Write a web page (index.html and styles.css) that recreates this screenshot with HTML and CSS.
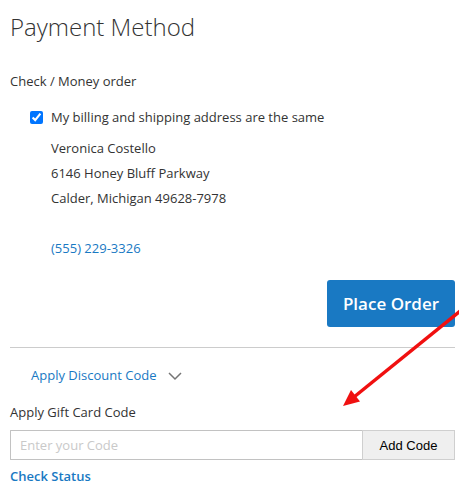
FILE: index.html
```html
<!DOCTYPE html>
<html lang="en">
<head>
  <meta charset="UTF-8">
  <title>Payment Method</title>
  <link rel="stylesheet" href="styles.css">
</head>
<body>
  <div class="checkout-payment">
    <div class="step-title">Payment Method</div>

    <div class="payment-method-title">Check / Money order</div>

    <div class="billing-same">
      <input type="checkbox" id="billing-same" checked>
      <label for="billing-same">My billing and shipping address are the same</label>
    </div>

    <div class="billing-address">
      <div>Veronica Costello</div>
      <div>6146 Honey Bluff Parkway</div>
      <div>Calder, Michigan 49628-7978</div>
      <div>&nbsp;</div>
      <a href="#" class="phone">(555) 229-3326</a>
    </div>

    <div class="actions-toolbar">
      <button class="action-primary">Place Order</button>
    </div>

    <div class="divider"></div>

    <div class="discount-toggle">
      <span>Apply Discount Code</span>
      <svg class="chevron" width="14" height="9" viewBox="0 0 14 9">
        <polyline points="1,1 7,7 13,1" fill="none" stroke="#757575" stroke-width="1.5"/>
      </svg>
    </div>

    <div class="giftcard-title">Apply Gift Card Code</div>
    <div class="giftcard-form">
      <input type="text" class="giftcard-input" placeholder="Enter your Code">
      <button class="giftcard-add">Add Code</button>
    </div>
    <a href="#" class="check-status">Check Status</a>
  </div>

  <!-- annotation arrow drawn over the page -->
  <svg class="annotation" width="459" height="501" viewBox="0 0 459 501">
    <line x1="464" y1="308" x2="354" y2="397" stroke="#f01010" stroke-width="3.5"/>
    <polygon points="343,406 351,390 360,401.5" fill="#f01010"/>
  </svg>
</body>
</html>
```

FILE: styles.css
```css
body {
  margin: 0;
  background: #fff;
  color: #333;
  font-family: "Open Sans", "Liberation Sans", sans-serif;
  font-size: 13px;
  overflow: hidden;
}

.checkout-payment {
  width: 445px;
  padding: 11px 0 0 10px;
}

.step-title {
  font-size: 24px;
  font-weight: 300;
  line-height: 32px;
}

.payment-method-title {
  margin-top: 26px;
  line-height: 25px;
}

.billing-same {
  margin-top: 11px;
  padding-left: 20px;
  display: flex;
  align-items: center;
  line-height: 25px;
}

.billing-same input {
  width: 13px;
  height: 13px;
  margin: 0 8px 0 0;
}

.billing-address {
  margin-top: 6px;
  padding-left: 41px;
  line-height: 25px;
}

.phone {
  color: #1979c3;
  text-decoration: none;
}

.actions-toolbar {
  margin-top: 19px;
  display: flex;
  justify-content: flex-end;
}

.action-primary {
  width: 128px;
  height: 47px;
  background: #1979c3;
  border: none;
  border-radius: 3px;
  color: #fff;
  font-family: "Open Sans", sans-serif;
  font-size: 17px;
  font-weight: 600;
  padding: 0;
}

.divider {
  margin-top: 20px;
  height: 1px;
  background: #ccc;
}

.discount-toggle {
  margin-top: 15px;
  padding-left: 21px;
  line-height: 25px;
  color: #1979c3;
  display: flex;
  align-items: center;
  gap: 12px;
}

.chevron {
  margin-top: 1px;
}

.giftcard-title {
  margin-top: 12px;
  line-height: 25px;
}

.giftcard-form {
  margin-top: 5px;
  display: flex;
}

.giftcard-input {
  flex: 1;
  height: 30px;
  box-sizing: border-box;
  border: 1px solid #c2c2c2;
  border-right: none;
  border-radius: 1px 0 0 1px;
  padding: 0 9px;
  font-family: "Open Sans", sans-serif;
  font-size: 13px;
  color: #333;
}

.giftcard-input::placeholder {
  color: #c9c9c9;
}

.giftcard-add {
  width: 93px;
  height: 30px;
  box-sizing: border-box;
  background: #efefef;
  border: 1px solid #cfcfcf;
  font-family: "Liberation Sans", Arial, sans-serif;
  font-size: 13px;
  color: #000;
  padding: 0;
}

.check-status {
  display: block;
  margin-top: 4px;
  line-height: 25px;
  font-size: 13px;
  font-weight: 600;
  color: #1979c3;
  text-decoration: none;
}

.annotation {
  position: absolute;
  top: 0;
  left: 0;
  pointer-events: none;
}
```
